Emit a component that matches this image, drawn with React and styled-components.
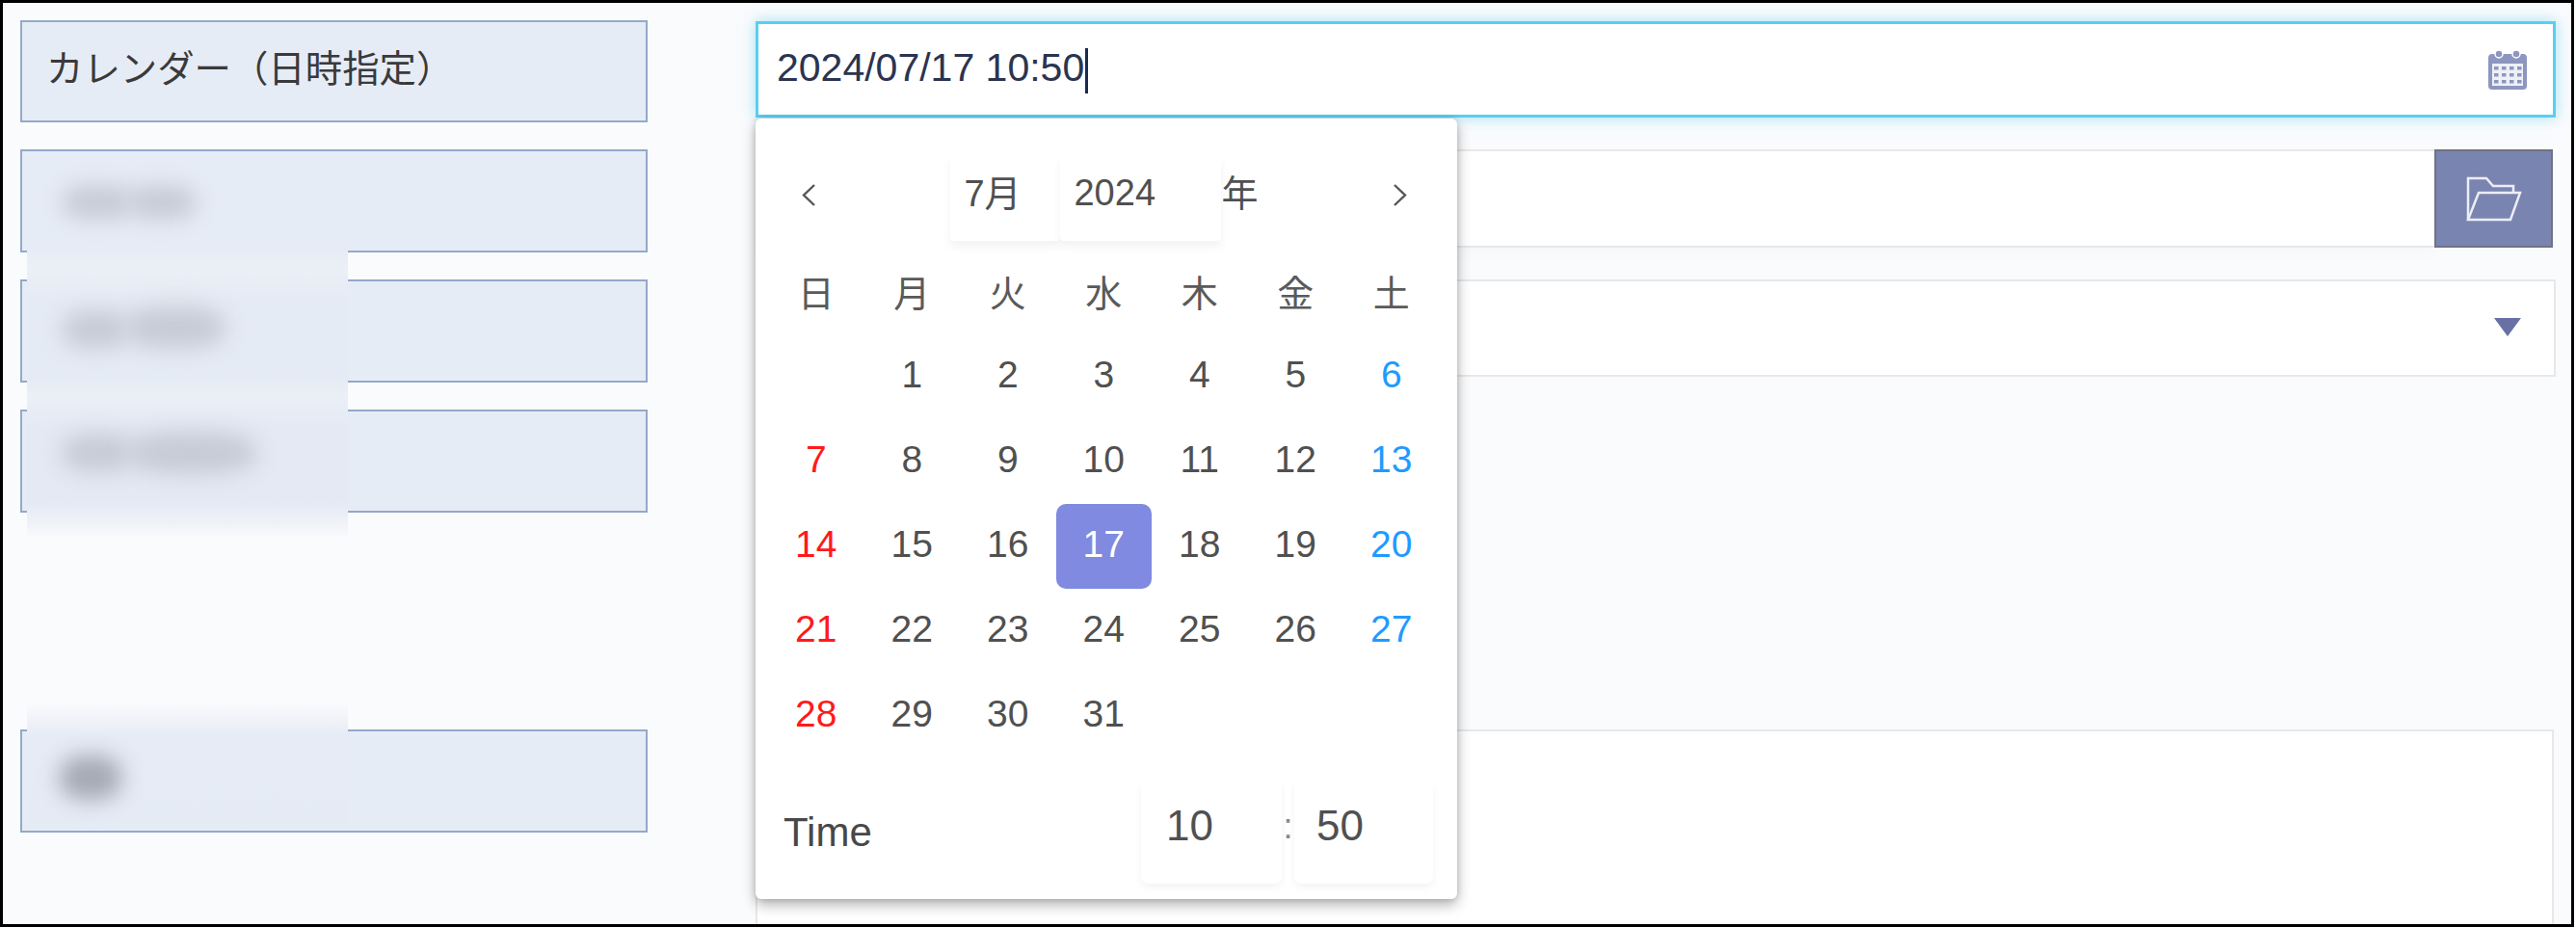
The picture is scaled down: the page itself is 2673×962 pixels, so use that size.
import React from 'react'
import styled, { createGlobalStyle } from 'styled-components'

const GlobalStyle = createGlobalStyle`
	html, body {
		margin: 0;
		background: #fff;
		overflow: hidden;
	}
	* {
		box-sizing: border-box;
	}
`

const SANS = `"Liberation Sans", "Noto Sans CJK JP", sans-serif`

const Frame = styled.div`
	position: relative;
	width: 2671px;
	height: 962px;
	padding: 18px 0 0 18px;
	border: 3px solid #000;
	background: #fafbfd;
	font-family: ${SANS};
	color: #333;
	overflow: hidden;
`

const Row = styled.div`
	display: grid;
	grid-template-columns: 651px 1868px;
	grid-template-rows: ${({ $height }) => $height || 107}px;
	column-gap: 112px;
	align-items: start;
	margin-bottom: ${({ $after }) => ($after === undefined ? 28 : $after)}px;
`

const Label = styled.div`
	display: flex;
	align-items: center;
	height: 100%;
	padding: 0 0 13px 25px;
	border: 2px solid #94a9c9;
	background: #e6ecf6;
	font-size: 38.4px;
	color: #3a3a3a;
`

const DateInput = styled.div`
	display: flex;
	align-items: center;
	justify-content: space-between;
	height: 100px;
	margin-top: 1px;
	padding: 0 27px 0 19px;
	border: 3px solid #5acff0;
	background: #fff;
	box-shadow: 0 0 14px rgba(90, 205, 240, .55);
	font-size: 41px;
	color: #2b3450;
`

const Caret = styled.span`
	display: inline-block;
	width: 3px;
	height: 47px;
	margin-left: 1px;
	background: #1a2a50;
	vertical-align: middle;
`

const FileField = styled.div`
	display: flex;
	height: 102px;
	padding-right: 3px;
`

const FileName = styled.div`
	flex: 1;
	border: 2px solid #e8e8ea;
	border-right: 0;
	background: #fff;
	box-shadow: 0 8px 12px rgba(0, 0, 0, .015);
`

const FolderButton = styled.button`
	display: flex;
	align-items: center;
	justify-content: center;
	width: 123px;
	padding: 0;
	border: 2px solid #6f7286;
	background: #7a84b0;
`

const SelectField = styled.div`
	display: flex;
	align-items: center;
	justify-content: flex-end;
	height: 101px;
	padding-right: 34px;
	border: 2px solid #e8e8ea;
	background: #fff;
`

const Triangle = styled.span`
	width: 0;
	height: 0;
	margin-bottom: 2px;
	border-left: 14px solid transparent;
	border-right: 14px solid transparent;
	border-top: 19px solid #6870a4;
`

const TextArea = styled.div`
	height: 240px;
	margin-right: 2px;
	border: 2px solid #e8e8ea;
	background: #fff;
`

/* ラベルの文字をぼかして隠している部分 */
const Mask = styled.div`
	position: absolute;
	left: 25px;
	top: ${({ $top }) => $top}px;
	width: 333px;
	height: ${({ $height }) => $height}px;
	background: ${({ $fill }) => $fill};
	pointer-events: none;
`

const Smudge = styled.span`
	position: absolute;
	left: ${({ $x }) => $x}px;
	top: ${({ $y }) => $y}px;
	width: ${({ $w }) => $w}px;
	height: ${({ $h }) => $h}px;
	border-radius: 40%;
	background: ${({ $dark }) => ($dark ? '#a6a9b3' : '#c7cbd5')};
	filter: blur(11px);
`

const Popup = styled.div`
	position: absolute;
	left: 781px;
	top: 120px;
	width: 728px;
	height: 810px;
	padding-top: 37px;
	border-radius: 6px;
	background: #fff;
	box-shadow: 0 6px 14px rgba(0, 0, 0, .3), 0 0 6px rgba(0, 0, 0, .14);
	color: #505050;
`

const Header = styled.div`
	display: flex;
	align-items: center;
	justify-content: space-between;
	height: 90px;
	padding: 0 51px 0 47px;
	font-size: 38px;

	> svg {
		margin-bottom: 6px;
	}
`

const HeaderGroup = styled.div`
	display: flex;
	align-items: center;
`

const PickerBox = styled.div`
	display: flex;
	align-items: center;
	width: ${({ $width }) => $width}px;
	height: 90px;
	padding: 0 0 ${({ $lift }) => $lift}px 14px;
	border-radius: 4px;
	background: #fff;
	box-shadow: 0 6px 10px rgba(0, 0, 0, .05);
`

const Year = styled.span`
	padding-bottom: 15px;
`

const DayGrid = styled.div`
	display: grid;
	grid-template-columns: repeat(7, 99.5px);
	grid-auto-rows: ${({ $rowHeight }) => $rowHeight}px;
	margin: ${({ $top }) => $top}px 0 0 13px;
`

const Weekday = styled.div`
	display: flex;
	align-items: center;
	justify-content: center;
	padding-bottom: 6px;
	font-size: 38px;
	color: #5a5a5a;
`

const dayColor = ({ $kind }) => ({
	sun: '#ff1a1a',
	sat: '#1e9bff',
	selected: '#fff'
}[$kind] || '#505050')

const Day = styled.div`
	display: flex;
	align-items: center;
	justify-content: center;
	padding-bottom: 4px;
	border-radius: 10px;
	background: ${({ $kind }) => ($kind === 'selected' ? '#7f8ae0' : 'transparent')};
	font-size: 39px;
	color: ${dayColor};
`

const TimeRow = styled.div`
	display: flex;
	align-items: center;
	height: 107px;
	margin-top: 23px;
	padding: 0 25px 0 29px;
`

const TimeLabel = styled.span`
	margin-right: auto;
	font-size: 42px;
	color: #484848;
`

const TimeBox = styled.div`
	display: flex;
	align-items: center;
	width: ${({ $width }) => $width}px;
	height: 107px;
	padding: 0 0 14px ${({ $inset }) => $inset}px;
	border-radius: 8px;
	background: #fff;
	box-shadow: 0 4px 8px rgba(0, 0, 0, .05);
	font-size: 44px;
`

const TimeColon = styled.span`
	width: 13px;
	padding-bottom: 12px;
	font-size: 36px;
	text-align: center;
	color: #8a8a8a;
`

const WEEKDAYS = ['日', '月', '火', '水', '木', '金', '土']

const kindOf = (day, column) => {
	if (day === 17) return 'selected'
	if (column === 0) return 'sun'
	if (column === 6) return 'sat'
	return undefined
}

const CalendarIcon = () => (
	<svg width="40" height="42" viewBox="0 0 40 42">
		<rect x="0" y="5" width="40" height="37" rx="4" fill="#8d96bf" />
		<circle cx="11" cy="5" r="4" fill="#8d96bf" stroke="#fff" strokeWidth="1.5" />
		<circle cx="29" cy="5" r="4" fill="#8d96bf" stroke="#fff" strokeWidth="1.5" />
		<rect x="4" y="15" width="32" height="23" fill="#eef0f7" />
		{[18, 25, 32].map(y => [6, 14, 22, 30].map(x => (
			<rect key={`${x}-${y}`} x={x} y={y} width="4.5" height="3.5" fill="#8d96bf" />
		)))}
	</svg>
)

const FolderIcon = () => (
	<svg width="58" height="47" viewBox="0 0 58 47" fill="none" stroke="#eceef6" strokeWidth="2.5">
		<path d="M2 45V2h19l7 8h21v7" />
		<path d="M2 45h44l10-28H13z" />
	</svg>
)

const Chevron = ({ right }) => (
	<svg width="17" height="25" viewBox="0 0 17 25" fill="none" stroke="#555" strokeWidth="2.4">
		<path d={right ? 'M3 2l11 10.5L3 23' : 'M14 2L3 12.5 14 23'} />
	</svg>
)

const Calendar = () => {
	const cells = [null, ...Array.from({ length: 31 }, (_, i) => i + 1)]
	return (
		<Popup>
			<Header>
				<Chevron />
				<HeaderGroup>
					<PickerBox $width={114} $lift={15}>7月</PickerBox>
					<PickerBox $width={167} $lift={9}>2024</PickerBox>
					<Year>年</Year>
				</HeaderGroup>
				<Chevron right />
			</Header>
			<DayGrid $rowHeight={80} $top={14}>
				{WEEKDAYS.map(name => <Weekday key={name}>{name}</Weekday>)}
			</DayGrid>
			<DayGrid $rowHeight={88} $top={3}>
				{cells.map((day, i) => (
					<Day key={i} $kind={day && kindOf(day, i % 7)}>{day}</Day>
				))}
			</DayGrid>
			<TimeRow>
				<TimeLabel>Time</TimeLabel>
				<TimeBox $width={146} $inset={26}>10</TimeBox>
				<TimeColon>:</TimeColon>
				<TimeBox $width={144} $inset={23}>50</TimeBox>
			</TimeRow>
		</Popup>
	)
}

const MASK_TOP = `linear-gradient(180deg,
	#e6ecf6 0, #e6ecf6 100px, #e8edf5 104px, #ebeff6 118px, #e9edf5 132px, #e5ebf5 150px,
	#e5ebf5 232px, #e8edf5 240px, #ebeff6 252px, #e8ecf5 266px, #e4e9f4 285px,
	#e4e9f4 360px, #f0f2f8 384px, #fafbfd 398px)`

const MASK_BOTTOM = `linear-gradient(180deg, #fafbfd 0, #f0f2f8 18px, #e6ebf5 34px, #e5ebf5 130px)`

const App = () => (
	<Frame>
		<GlobalStyle />
		<Row $height={106}>
			<Label>カレンダー（日時指定）</Label>
			<DateInput>
				<span>2024/07/17 10:50<Caret /></span>
				<CalendarIcon />
			</DateInput>
		</Row>
		<Row>
			<Label />
			<FileField>
				<FileName />
				<FolderButton><FolderIcon /></FolderButton>
			</FileField>
		</Row>
		<Row>
			<Label />
			<SelectField><Triangle /></SelectField>
		</Row>
		<Row $after={225}>
			<Label />
			<div />
		</Row>
		<Row>
			<Label />
			<TextArea />
		</Row>
		<Mask $top={157} $height={398} $fill={MASK_TOP}>
			<Smudge $x={36} $y={32} $w={74} $h={36} />
			<Smudge $x={104} $y={32} $w={72} $h={36} />
			<Smudge $x={36} $y={162} $w={70} $h={40} />
			<Smudge $x={102} $y={158} $w={104} $h={44} />
			<Smudge $x={36} $y={290} $w={74} $h={40} />
			<Smudge $x={104} $y={288} $w={134} $h={44} />
		</Mask>
		<Mask $top={727} $height={130} $fill={MASK_BOTTOM}>
			<Smudge $x={34} $y={54} $w={64} $h={46} $dark />
		</Mask>
		<Calendar />
	</Frame>
)

export default App
